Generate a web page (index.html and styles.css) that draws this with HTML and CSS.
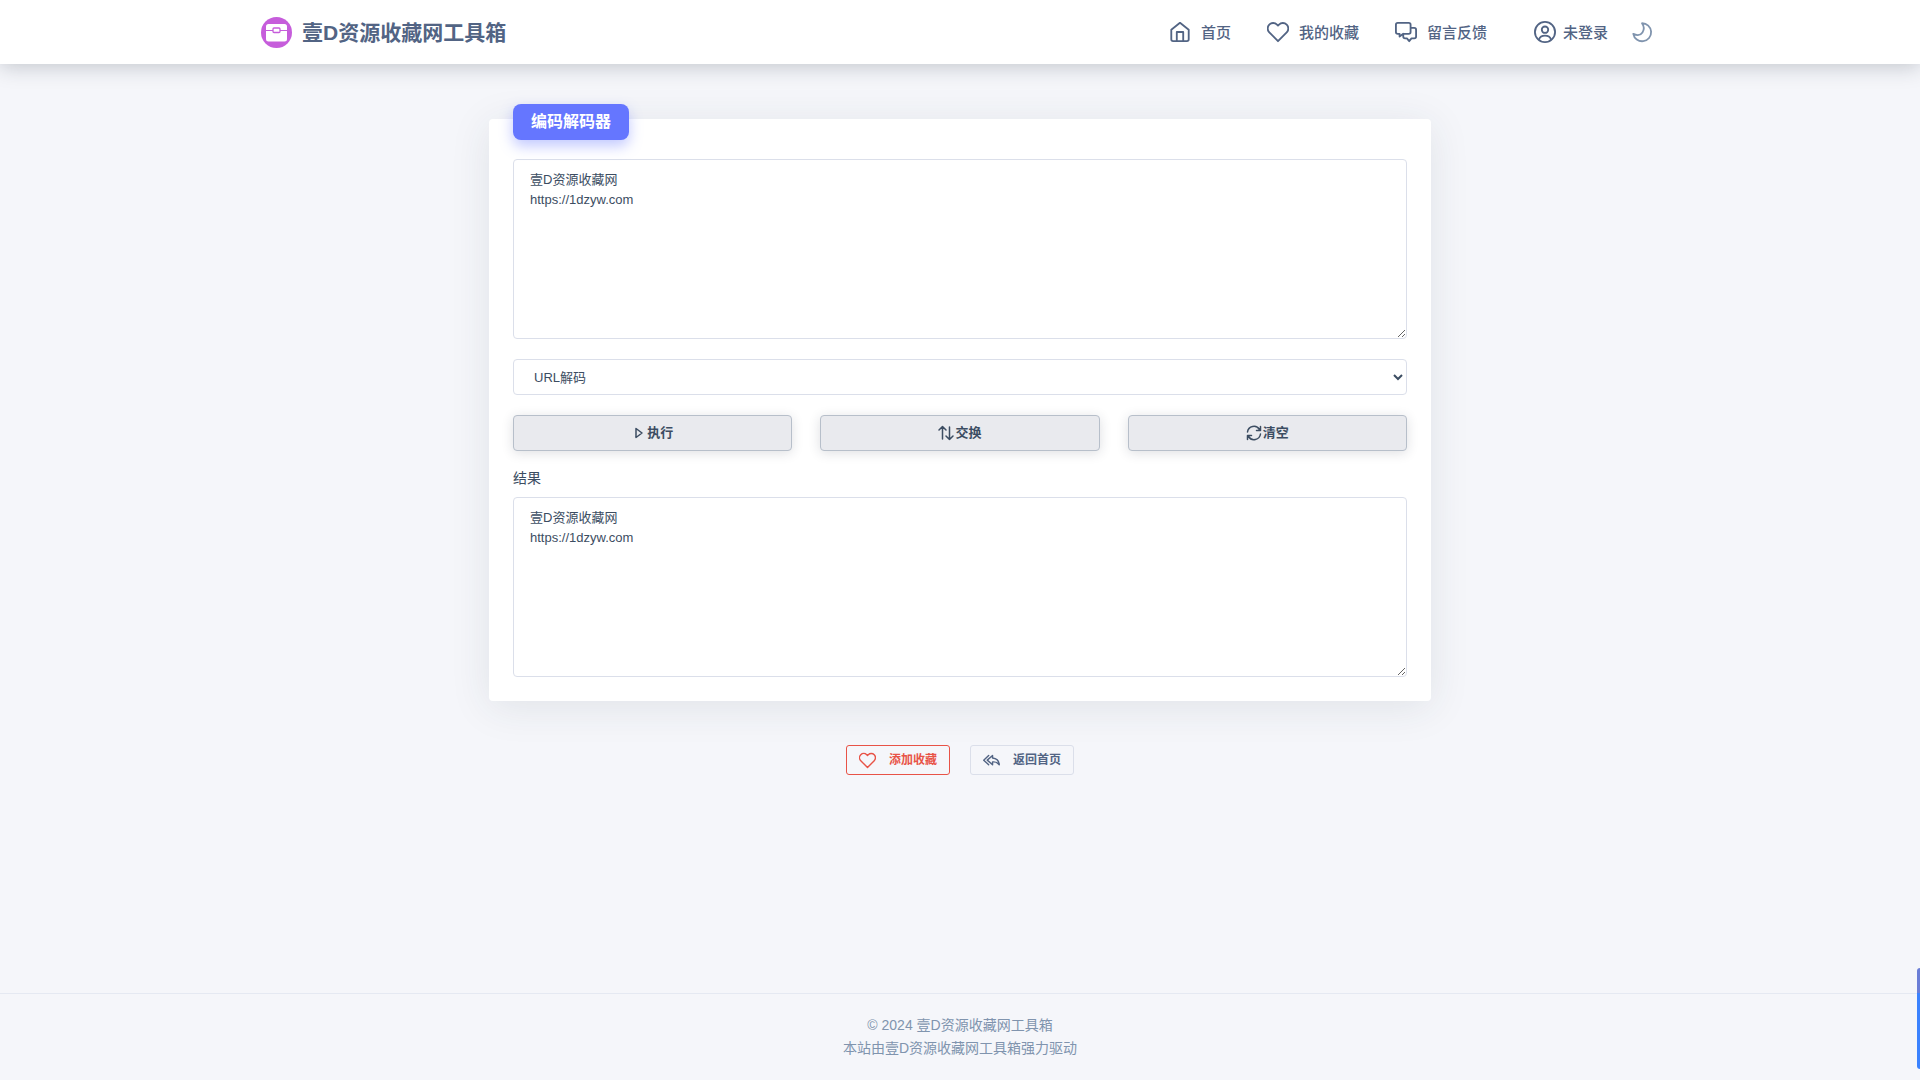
FILE: index.html
```html
<!DOCTYPE html>
<html lang="zh-CN">
<head>
    <meta charset="UTF-8">
    <meta name="viewport" content="width=device-width, initial-scale=1.0">
    <title>编码解码器 - 壹D资源收藏网工具箱</title>
    <link rel="stylesheet" href="styles.css">
</head>
<body>
    <header class="header">
        <div class="container">
            <a href="#" class="logo">
                <svg width="31" height="31" viewBox="0 0 31 31" aria-hidden="true">
                    <circle cx="15.500" cy="15.500" r="15.500" fill="#c65ddb"/>
                    <rect x="5" y="7" width="21" height="17.500" rx="2.500" fill="#fff"/>
                    <path d="M5 13.500h21" stroke="#c65ddb"/>
                    <rect x="12" y="11" width="7" height="4.500" rx="1" fill="#fff" stroke="#c65ddb" stroke-width="1.300"/>
                </svg>
                <span>壹D资源收藏网工具箱</span>
            </a>
            <nav class="menu">
                <a href="#" class="menu-link">
                    <svg class="icon" viewBox="0 0 24 24" aria-hidden="true"><path d="M2.500 9.500 12 2l9.500 7.500V20a2 2 0 0 1-2 2h-15a2 2 0 0 1-2-2zM8.500 22V12h7v10"/></svg>
                    <span>首页</span>
                </a>
                <a href="#" class="menu-link">
                    <svg class="icon" viewBox="0 0 24 24" aria-hidden="true"><path d="M21.500 3.900a5.900 5.900 0 0 0-8.400 0L12 5l-1.100-1.100a5.900 5.900 0 0 0-8.400 8.400L12 22l9.500-9.700a5.900 5.900 0 0 0 0-8.400z"/></svg>
                    <span>我的收藏</span>
                </a>
                <a href="#" class="menu-link">
                    <svg class="icon" viewBox="0 0 24 24" aria-hidden="true"><path d="M17 7.500V4a2 2 0 0 0-2-2H3a2 2 0 0 0-2 2v8a2 2 0 0 0 2 2h2v3l4-3M17 7.500h4a2 2 0 0 1 2 2V17a2 2 0 0 1-2 2h-3l-2.500 3-2.500-3h-2a2 2 0 0 1-2-2v-3h6a2 2 0 0 0 2-2z"/></svg>
                    <span>留言反馈</span>
                </a>
                <a href="#" class="menu-link user">
                    <svg class="icon" viewBox="0 0 24 24" aria-hidden="true"><circle cx="12" cy="12" r="11"/><circle cx="12" cy="9.500" r="3.500"/><path d="M5.500 20c1-3 3.300-4 6.500-4s5.500 1 6.500 4"/></svg>
                    <span>未登录</span>
                </a>
                <button type="button" class="theme" aria-label="夜间模式">
                    <svg class="icon" viewBox="0 0 24 24" aria-hidden="true"><path d="M12 2.500A9.800 9.800 0 1 1 2.500 14c4 2 8 1.500 10-1.500S14.500 6 12 2.500z"/></svg>
                </button>
            </nav>
        </div>
    </header>

    <main>
        <section class="card">
            <h1 class="card-title">编码解码器</h1>
            <form>
                <textarea class="field" id="content" aria-label="内容">壹D资源收藏网
https://1dzyw.com</textarea>
                <select class="field" id="type" aria-label="类型">
                    <option>URL解码</option>
                    <option>URL编码</option>
                </select>
                <div class="actions">
                    <button type="button" class="btn">
                        <svg class="icon" viewBox="0 0 14 14" aria-hidden="true"><path d="M4 2.500v9L10 7z"/></svg>
                        <span>执行</span>
                    </button>
                    <button type="button" class="btn">
                        <svg class="icon wide" viewBox="0 0 16 16" aria-hidden="true"><path d="M4.500 14V2M1 5l3.500-3.500L8 5M11.500 2v12.500M8 11l3.500 3.500L15 11"/></svg>
                        <span>交换</span>
                    </button>
                    <button type="button" class="btn">
                        <svg class="icon wide" viewBox="0 0 16 16" aria-hidden="true"><path d="M1.500 7a6.500 6.500 0 0 1 12-2.500M14.500 1.500v4h-4M14.500 9a6.500 6.500 0 0 1-12 2.500M1.500 14.500v-4h4"/></svg>
                        <span>清空</span>
                    </button>
                </div>
                <label for="result">结果</label>
                <textarea class="field" id="result">壹D资源收藏网
https://1dzyw.com</textarea>
            </form>
        </section>

        <div class="links">
            <button type="button" class="btn-sm danger">
                <svg class="icon" viewBox="0 0 24 24" aria-hidden="true"><path d="M21.500 3.900a5.900 5.900 0 0 0-8.400 0L12 5l-1.100-1.100a5.900 5.900 0 0 0-8.400 8.400L12 22l9.500-9.700a5.900 5.900 0 0 0 0-8.400z"/></svg>
                <span>添加收藏</span>
            </button>
            <a href="#" class="btn-sm">
                <svg class="icon" viewBox="0 0 24 24" aria-hidden="true"><path d="M8 5 1 11.500 8 18M13.500 5 6 11.500l7.500 6.500v-4c4-.5 7 .5 9.500 4-.5-6-4-9-9.500-9.500z"/></svg>
                <span>返回首页</span>
            </a>
        </div>
    </main>

    <footer class="footer">
        <p>© 2024 壹D资源收藏网工具箱</p>
        <p>本站由壹D资源收藏网工具箱强力驱动</p>
    </footer>

    <div class="side-tab"></div>
</body>
</html>
```

FILE: styles.css
```css
* {
    box-sizing: border-box;
}

body {
    display: flex;
    flex-direction: column;
    min-height: 100vh;
    margin: 0;
    font-family: "Liberation Sans", "Noto Sans CJK SC", sans-serif;
    font-size: 14px;
    line-height: 23px;
    color: #3c4d62;
    background: #f5f6fa;
}

a {
    color: inherit;
    text-decoration: none;
}

button,
select,
textarea {
    font-family: inherit;
    color: inherit;
}

.icon {
    flex: none;
    fill: none;
    stroke: currentColor;
    stroke-width: 2;
    stroke-linecap: round;
    stroke-linejoin: round;
}

/* header */
.header {
    background: #fff;
    color: #526484;
    box-shadow: 0 2px 20px rgba(31, 43, 58, 0.25);
}

.container {
    display: flex;
    align-items: center;
    justify-content: space-between;
    max-width: 1440px;
    height: 64px;
    margin: 0 auto;
    padding: 0 27px 0 21px;
}

.logo {
    display: flex;
    align-items: center;
    gap: 10px;
    font-size: 21px;
    font-weight: 700;
}

.menu {
    display: flex;
    align-items: center;
    gap: 36px;
    font-size: 15px;
    font-weight: 500;
}

.menu-link {
    display: flex;
    align-items: center;
    gap: 10px;
}

.menu-link .icon {
    width: 22px;
    height: 22px;
}

.user {
    gap: 7px;
    margin-left: 11px;
}

.theme {
    display: flex;
    margin-left: -13px;
    padding: 0;
    border: 0;
    background: none;
    color: #8094ae;
    cursor: pointer;
}

.theme .icon {
    width: 22px;
    height: 22px;
}

/* card */
main {
    flex: 1;
    padding: 55px 20px;
}

.card {
    max-width: 942px;
    margin: 0 auto;
    padding: 0 24px 24px;
    border-radius: 4px;
    background: #fff;
    box-shadow: 0 6px 40px rgba(43, 55, 72, 0.1);
}

.card-title {
    position: relative;
    top: -15px;
    width: fit-content;
    margin: 0 0 4px;
    padding: 0 18px;
    border-radius: 8px;
    background: #6576ff;
    color: #fff;
    font-size: 16px;
    line-height: 36px;
    box-shadow: 0 6px 14px rgba(101, 118, 255, 0.4);
}

.field {
    display: block;
    width: 100%;
    margin: 0 0 20px;
    padding: 10px 16px;
    border: 1px solid #dbdfea;
    border-radius: 4px;
    background: #fff;
    font-size: 13px;
    line-height: 20px;
}

textarea.field {
    height: 180px;
}

select.field {
    height: 36px;
    padding: 0 0 0 16px;
}

.actions {
    display: flex;
    gap: 28px;
    margin-bottom: 16px;
}

.btn {
    display: flex;
    flex: 1;
    align-items: center;
    justify-content: center;
    gap: 1px;
    height: 36px;
    border: 1px solid #b7bfca;
    border-radius: 4px;
    background: #e9eaee;
    font-size: 13px;
    font-weight: 700;
    line-height: 20px;
    box-shadow: 0 2px 12px rgba(31, 43, 58, 0.15);
    cursor: pointer;
}

.btn .icon {
    width: 14px;
    height: 14px;
    stroke-width: 1.5;
}

.btn .wide {
    width: 16px;
    height: 16px;
}

label {
    display: block;
    margin-bottom: 8px;
    line-height: 22px;
}

#result {
    margin-bottom: 0;
}

/* links under the card */
.links {
    display: flex;
    justify-content: center;
    gap: 20px;
    margin-top: 44px;
}

.btn-sm {
    display: flex;
    align-items: center;
    gap: 13px;
    height: 30px;
    padding: 0 12px;
    border: 1px solid #dbdfea;
    border-radius: 3px;
    background: transparent;
    color: #526484;
    font-size: 12px;
    font-weight: 700;
    line-height: 20px;
    cursor: pointer;
}

.btn-sm .icon {
    width: 17px;
    height: 17px;
}

.danger {
    border-color: #e85347;
    color: #e85347;
}

/* footer */
.footer {
    padding: 20px;
    border-top: 1px solid #e5e9f2;
    color: #8094ae;
    text-align: center;
}

.footer p {
    margin: 0;
}

.side-tab {
    position: fixed;
    right: 0;
    bottom: 11px;
    width: 3px;
    height: 101px;
    border-radius: 4px 0 0 4px;
    background: linear-gradient(#6a7dd6 25px, #3b82fe 25px);
}
```
